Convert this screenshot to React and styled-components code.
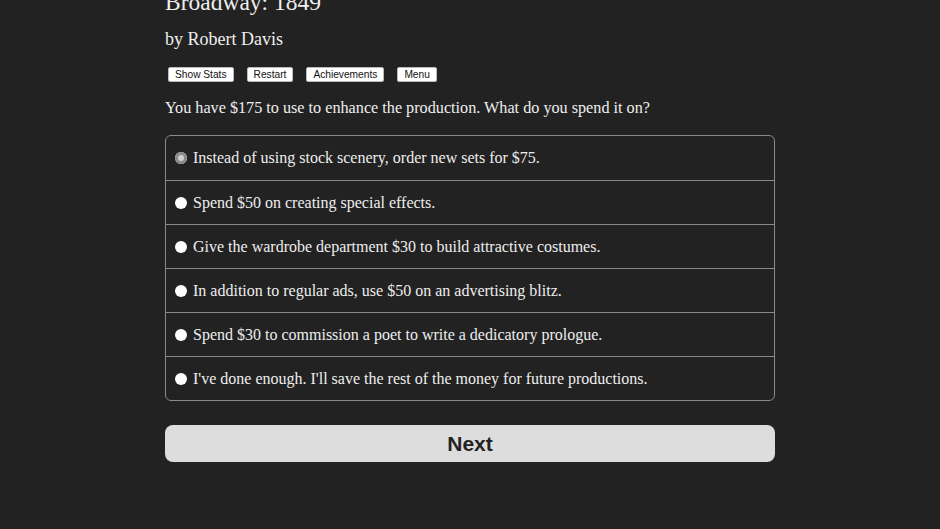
import React, { useState } from 'react'
import styled, { createGlobalStyle } from 'styled-components'

const GlobalStyle = createGlobalStyle`
  html, body {
    margin: 0;
    padding: 0;
    background: #222222;
    overflow: hidden;
  }
  body {
    font-family: "Liberation Serif", "Times New Roman", serif;
    color: #eeeeee;
  }
`

const Page = styled.div`
  width: 610px;
  margin: -13px auto 0;
`

const Title = styled.h1`
  margin: 0;
  font-size: 23.5px;
  font-weight: normal;
  line-height: 30px;
`

const Author = styled.h2`
  margin: 11px 0 0;
  font-size: 18px;
  font-weight: normal;
  line-height: 22px;
`

const Toolbar = styled.div`
  display: flex;
  gap: 13px;
  margin: 17px 0 0 3px;
`

const SmallButton = styled.button`
  font-family: "Liberation Sans", Arial, sans-serif;
  font-size: 10.2px;
  line-height: 12px;
  padding: 1px 6px 0;
  background: #ffffff;
  color: #111111;
  border: 1px solid #bbbbbb;
  border-radius: 2px;
`

const Question = styled.p`
  margin: 16px 0 0;
  font-size: 16.2px;
  line-height: 20px;
`

const Choices = styled.div`
  margin-top: 17px;
  border: 1px solid #8a8a8a;
  border-radius: 6px;
  overflow: hidden;
`

const Choice = styled.label`
  display: flex;
  align-items: center;
  height: ${p => (p.first ? '44px' : '43px')};
  padding-left: 9px;
  font-size: 16px;
  border-top: ${p => (p.first ? 'none' : '1px solid #8a8a8a')};
  cursor: pointer;
`

const Radio = styled.span`
  width: 12px;
  height: 12px;
  border-radius: 50%;
  margin-right: 6px;
  flex: none;
  background: ${p => (p.checked ? '#8a8a8a' : '#ffffff')};
  box-shadow: ${p => (p.checked ? 'inset 0 0 0 3px #8a8a8a, inset 0 0 0 6px #cfcfcf' : 'none')};
`

const NextButton = styled.button`
  display: block;
  width: 100%;
  height: 37px;
  margin-top: 24px;
  background: #dddddd;
  color: #222222;
  border: none;
  border-radius: 8px;
  font-family: "Liberation Sans", Arial, sans-serif;
  font-weight: bold;
  font-size: 21px;
`

const options = [
  'Instead of using stock scenery, order new sets for $75.',
  'Spend $50 on creating special effects.',
  'Give the wardrobe department $30 to build attractive costumes.',
  'In addition to regular ads, use $50 on an advertising blitz.',
  'Spend $30 to commission a poet to write a dedicatory prologue.',
  "I've done enough. I'll save the rest of the money for future productions.",
]

export default function App() {
  const [picked, setPicked] = useState(0)
  return (
    <Page>
      <GlobalStyle />
      <Title>Broadway: 1849</Title>
      <Author>by Robert Davis</Author>
      <Toolbar>
        <SmallButton>Show Stats</SmallButton>
        <SmallButton>Restart</SmallButton>
        <SmallButton>Achievements</SmallButton>
        <SmallButton>Menu</SmallButton>
      </Toolbar>
      <Question>You have $175 to use to enhance the production. What do you spend it on?</Question>
      <Choices>
        {options.map((text, i) => (
          <Choice key={i} first={i === 0} onClick={() => setPicked(i)}>
            <Radio checked={picked === i} />
            {text}
          </Choice>
        ))}
      </Choices>
      <NextButton>Next</NextButton>
    </Page>
  )
}
